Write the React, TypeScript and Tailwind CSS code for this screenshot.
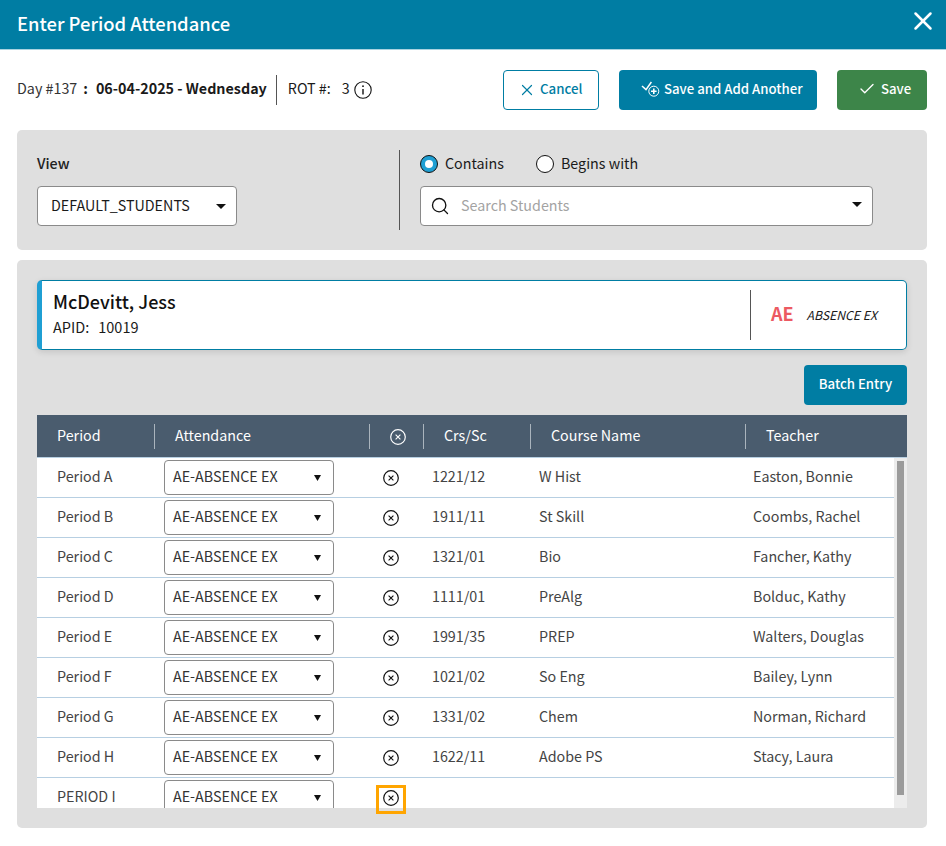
import React from "react";
import { X, Check, Search } from "lucide-react";

const rows = [
  ["Period A", "1221/12", "W Hist", "Easton, Bonnie"],
  ["Period B", "1911/11", "St Skill", "Coombs, Rachel"],
  ["Period C", "1321/01", "Bio", "Fancher, Kathy"],
  ["Period D", "1111/01", "PreAlg", "Bolduc, Kathy"],
  ["Period E", "1991/35", "PREP", "Walters, Douglas"],
  ["Period F", "1021/02", "So Eng", "Bailey, Lynn"],
  ["Period G", "1331/02", "Chem", "Norman, Richard"],
  ["Period H", "1622/11", "Adobe PS", "Stacy, Laura"],
  ["PERIOD I", "", "", ""],
];

function CircleX({ size = 16 }: { size?: number }) {
  return (
    <svg width={size} height={size} viewBox="0 0 16 16" fill="none" stroke="currentColor">
      <circle cx="8" cy="8" r="7.3" strokeWidth="1.2" />
      <path d="M5.6 5.6l4.8 4.8M10.4 5.6l-4.8 4.8" strokeWidth="1.1" />
    </svg>
  );
}

function Caret({ w = 12, h = 6 }: { w?: number; h?: number }) {
  return (
    <svg width={w} height={h} viewBox="0 0 12 6" preserveAspectRatio="none" className="shrink-0">
      <path d="M0 0h12L6 6z" fill="#111" />
    </svg>
  );
}

export default function App() {
  return (
    <div className="w-[946px] h-[846px] overflow-hidden bg-white text-[#1a1a1a] font-['Noto_Sans_CJK_SC','Noto_Sans',sans-serif] text-[14.3px]">
      <header className="h-[50px] bg-[#007da3] border-b border-[#a9d3e0] flex items-center justify-between pl-[17px] pr-[8px] text-white">
        <h1 className="text-[18.4px] font-medium leading-none -mt-[3px]">Enter Period Attendance</h1>
        <X size={30} strokeWidth={2} className="-mt-[8px]" />
      </header>

      <div className="h-[80px] flex items-center justify-between pl-[17px] pr-[19px]">
        <div className="flex items-center h-[30px] -mt-[1px]">
          <span className="text-[#333] -mt-[4px]">Day #137</span>
          <span className="font-bold ml-[6px] -mt-[4px]">:</span>
          <span className="font-bold ml-[8px] -mt-[4px]">06-04-2025 - Wednesday</span>
          <span className="w-px h-[30px] bg-[#555] ml-[9px]" />
          <span className="ml-[11px] -mt-[4px]">ROT #:</span>
          <span className="ml-[11px] -mt-[4px]">3</span>
          <span className="ml-[4px] w-[18px] h-[18px]">
            <svg width="18" height="18" viewBox="0 0 18 18" fill="none" stroke="#111" strokeWidth="1.1">
              <circle cx="9" cy="9" r="8.2" />
              <path d="M9 8v5.5" strokeWidth="1.4" />
              <circle cx="9" cy="5.2" r="0.9" fill="#111" stroke="none" />
            </svg>
          </span>
        </div>
        <div className="flex items-center gap-[20px]">
          <button className="w-[96px] h-[40px] pb-[2px] rounded-[4px] border border-[#007da3] bg-white text-[#007da3] flex items-center pl-[14px] text-[13.3px] font-medium">
            <X size={18} strokeWidth={1.6} className="mr-[4px] mt-[1px]" />
            Cancel
          </button>
          <button className="w-[198px] h-[40px] pb-[2px] rounded-[4px] bg-[#007da3] text-white flex items-center pl-[22px] text-[13.2px] font-medium">
            <svg width="19" height="17" viewBox="0 0 19 17" fill="none" stroke="white" className="mr-[4px]">
              <path d="M1 5l4 3.6L10.4 1" strokeWidth="1.5" />
              <circle cx="12.8" cy="10.2" r="5" strokeWidth="1" />
              <path d="M12.8 7.4v5.6M10 10.2h5.6" strokeWidth="1.6" />
            </svg>
            Save and Add Another
          </button>
          <button className="w-[90px] h-[40px] pb-[2px] rounded-[4px] bg-[#3d8549] text-white flex items-center pl-[21px] gap-[5px] text-[13.2px] font-medium">
            <Check size={18} strokeWidth={1.8} />
            Save
          </button>
        </div>
      </div>

      <section className="ml-[17px] mr-[19px] h-[120px] rounded-[5px] bg-[#dfdfdf] flex items-center pl-[20px] pr-[54px]">
        <div className="w-[362px] h-[80px] pb-[4px] flex flex-col justify-between">
          <label className="font-medium leading-[26px] text-[#222]">View</label>
          <div className="w-[200px] h-[40px] bg-white border border-[#8a8a8a] rounded-[4px] flex items-center justify-between pl-[13px] pr-[10px]">
            <span className="-mt-[3px]">DEFAULT_STUDENTS</span>
            <span className="mt-[1px]"><Caret w={10} h={5} /></span>
          </div>
        </div>
        <div className="w-px h-[80px] bg-[#555]" />
        <div className="flex-1 ml-[20px] h-[80px] pb-[4px] flex flex-col justify-between">
          <div className="h-[26px] flex items-center mt-[1px]">
            <span className="w-[18px] h-[18px] rounded-full border border-[#111] bg-[#1f9fd3] flex items-center justify-center">
              <span className="w-[8px] h-[8px] rounded-full bg-white" />
            </span>
            <span className="ml-[7px] -mt-[2px]">Contains</span>
            <span className="ml-[32px] w-[18px] h-[18px] rounded-full border border-[#111] bg-white" />
            <span className="ml-[7px] -mt-[2px]">Begins with</span>
          </div>
          <div className="h-[40px] bg-white border border-[#8a8a8a] rounded-[4px] flex items-center pl-[9px] pr-[10px]">
            <Search size={20} strokeWidth={1.6} className="text-[#111] -mt-[1px]" />
            <span className="ml-[11px] text-[#a3a3a3] flex-1 -mt-[3px]">Search Students</span>
            <span className="-mt-[3px]"><Caret w={10} h={5} /></span>
          </div>
        </div>
      </section>

      <section className="mt-[10px] ml-[17px] mr-[19px] h-[568px] rounded-[5px] bg-[#dfdfdf] px-[20px] pt-[20px]">
        <div className="h-[70px] rounded-[5px] bg-white border border-[#007da3] border-l-[5px] border-l-[#1f9fd3] shadow-[0_2px_6px_rgba(0,0,0,0.12)] flex items-center">
          <div className="flex-1 pl-[11px] -mt-[5px]">
            <div className="text-[18px] font-medium leading-[26px] text-[#111]">McDevitt, Jess</div>
            <div className="text-[14.5px] leading-[22px] mt-[2px]">
              APID:<span className="ml-[9px]">10019</span>
            </div>
          </div>
          <div className="w-px h-[50px] bg-[#555]" />
          <div className="w-[155px] pl-[20px] flex items-center">
            <span className="text-[#ec5a62] text-[18px] font-bold leading-none -mt-[3px]">AE</span>
            <span className="ml-[13px] text-[12.2px] italic">ABSENCE EX</span>
          </div>
        </div>

        <div className="flex justify-end mt-[15px]">
          <button className="w-[103px] h-[40px] pb-[2px] rounded-[4px] bg-[#007da3] text-white text-[13.2px] font-medium">Batch Entry</button>
        </div>

        <div className="mt-[10px] h-[43px] bg-[#4a5c6e] border-b border-[#b7cfe2] text-white grid grid-cols-[118px_215px_54px_107px_215px_161px] items-center">
          {["Period", "Attendance", "", "Crs/Sc", "Course Name", "Teacher"].map((h, i) => (
            <div key={i} className={`h-[25px] flex items-center ${i < 5 ? "border-r border-[#aab4bd]" : ""} ${i === 2 ? "justify-center pl-[2px] pt-[2px]" : "pl-[20px] pb-[2px]"}`}>
              {i === 2 ? <CircleX /> : h}
            </div>
          ))}
        </div>

        <div className="relative">
          <div className="h-[350px] overflow-hidden bg-white flex">
            <div className="w-[857px]">
              {rows.map((r, i) => (
                <div key={i} className="h-[40px] border-b border-[#b7cfe2] grid grid-cols-[127px_206px_62px_107px_214px_141px] items-center text-[#444]">
                  <div className="pl-[20px] -mt-[3px]">{r[0]}</div>
                  <div className="h-[35px] w-[170px] border border-[#8a8a8a] rounded-[4px] flex items-center justify-between pl-[8px] pr-[12px] text-[#333] bg-white">
                    <span className="-mt-[3px]">AE-ABSENCE EX</span>
                    <span className="mt-[1px]"><Caret w={7} h={6} /></span>
                  </div>
                  <div className="flex justify-center pr-[20px] text-[#111]">
                    <CircleX />
                  </div>
                  <div className="-mt-[3px]">{r[1]}</div>
                  <div className="-mt-[3px]">{r[2]}</div>
                  <div className="-mt-[3px]">{r[3]}</div>
                </div>
              ))}
            </div>
            <div className="w-[13px] bg-[#ececec] pl-[3px] pt-[3px]">
              <div className="w-[7px] h-[334px] bg-[#9b9b9b]" />
            </div>
          </div>
          <div className="absolute left-[339px] top-[327px] w-[30px] h-[29px] border-[3px] border-[#ffa500]" />
        </div>
      </section>
    </div>
  );
}
